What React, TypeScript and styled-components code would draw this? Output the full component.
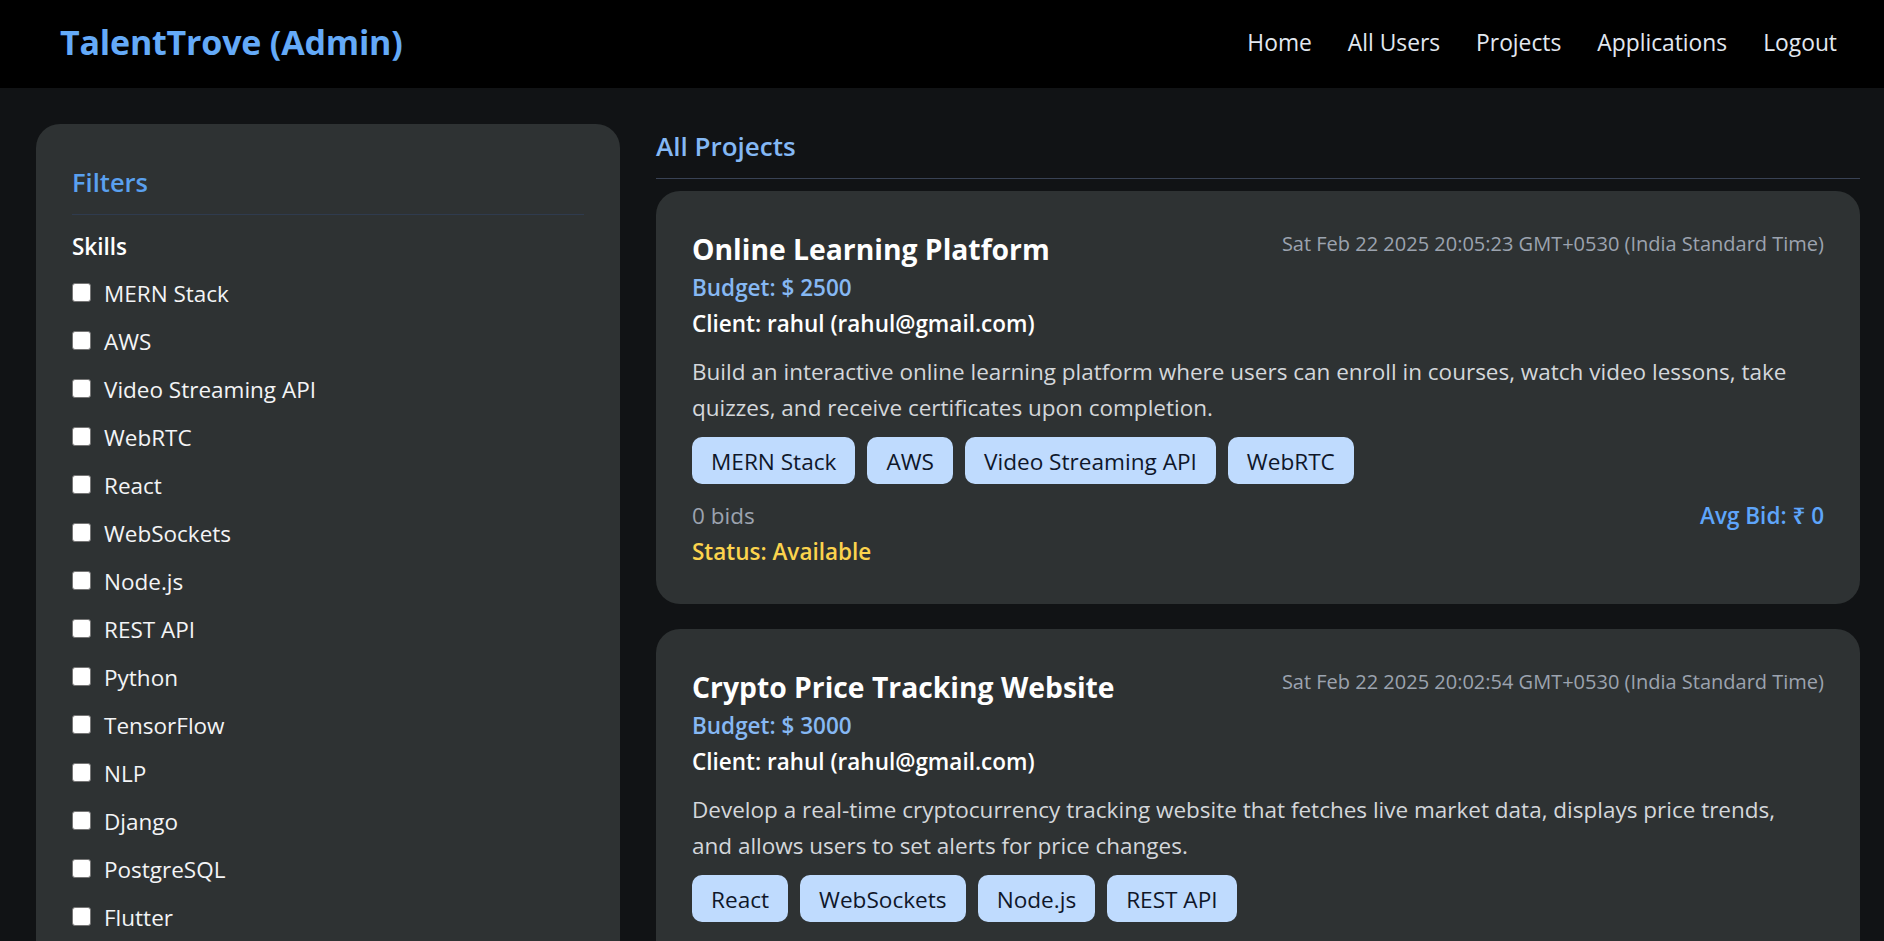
import React from "react";
import styled, { createGlobalStyle } from "styled-components";

const GlobalStyle = createGlobalStyle`
  * { box-sizing: border-box; }
  html, body { margin: 0; padding: 0; background: #111315; }
  body {
    font-family: "Open Sans", "Noto Sans", sans-serif;
    color: #ffffff;
    -webkit-font-smoothing: antialiased;
  }
`;

const Header = styled.header`
  height: 88px;
  background: #000000;
  display: flex;
  align-items: center;
  justify-content: space-between;
  padding: 0 47px 4px 60px;
`;

const Logo = styled.div`
  font-size: 34px;
  font-weight: 700;
  color: #64aaf8;
  letter-spacing: -0.2px;
`;

const Nav = styled.nav`
  display: flex;
  gap: 36px;
`;

const NavLink = styled.a`
  color: #e2e8f0;
  font-size: 22.8px;
  text-decoration: none;
  cursor: pointer;
`;

const Layout = styled.div`
  display: grid;
  grid-template-columns: 584px 1fr;
  gap: 36px;
  padding: 36px 24px 36px 36px;
  align-items: start;
`;

const Sidebar = styled.aside`
  background: #2e3233;
  border-radius: 24px;
  padding: 40px 36px 36px;
`;

const SidebarTitle = styled.h2`
  margin: 0;
  font-size: 25.5px;
  font-weight: 600;
  line-height: 36px;
  color: #5aa0ef;
  padding-bottom: 14px;
  border-bottom: 1px solid #2f3b4e;
`;

const GroupTitle = styled.h3`
  margin: 17px 0 8px;
  font-size: 22.5px;
  font-weight: 600;
  line-height: 30px;
  color: #ffffff;
`;

const SkillList = styled.div`
  display: flex;
  flex-direction: column;
`;

const SkillRow = styled.label`
  display: flex;
  align-items: center;
  gap: 13px;
  height: 48px;
  font-size: 22.5px;
  line-height: 48px;
  color: #f3f4f6;
  cursor: pointer;
`;

const Checkbox = styled.input.attrs({ type: "checkbox" })`
  appearance: none;
  -webkit-appearance: none;
  margin: 0 0 3px 0;
  width: 19px;
  height: 19px;
  flex: none;
  background: #ffffff;
  border: 1px solid #767676;
  border-radius: 3px;
`;

const Main = styled.main`
  display: flex;
  flex-direction: column;
  min-width: 0;
`;

const PageTitle = styled.h2`
  margin: 0;
  font-size: 26px;
  font-weight: 600;
  line-height: 36px;
  color: #84b8f4;
  padding: 4px 0 14px;
  border-bottom: 1px solid #394254;
`;

const CardList = styled.div`
  display: flex;
  flex-direction: column;
  gap: 25px;
  margin-top: 12px;
`;

const Card = styled.article`
  background: #2e3233;
  border-radius: 24px;
  padding: 38px 36px 34px;
`;

const CardHead = styled.div`
  display: flex;
  justify-content: space-between;
  align-items: flex-start;
  gap: 24px;
`;

const Title = styled.h3`
  margin: 0;
  font-size: 28.3px;
  font-weight: 700;
  line-height: 40px;
  color: #ffffff;
`;

const DateText = styled.span`
  font-size: 20px;
  line-height: 30px;
  color: #9ca3af;
  white-space: nowrap;
`;

const Budget = styled.div`
  margin-top: 1px;
  font-size: 22.5px;
  font-weight: 600;
  line-height: 36px;
  color: #86b8f3;
`;

const Client = styled.div`
  font-size: 22.5px;
  font-weight: 600;
  line-height: 36px;
  color: #ffffff;
`;

const Description = styled.p`
  margin: 12px 0 0;
  font-size: 22.5px;
  line-height: 36px;
  color: #d4d7db;
  padding-right: 12px;
`;

const Tags = styled.div`
  display: flex;
  flex-wrap: wrap;
  gap: 12px;
  margin-top: 11px;
`;

const Tag = styled.span`
  background: #bfdbfe;
  color: #0f172a;
  border-radius: 10px;
  padding: 10px 19px 7px;
  font-size: 22.6px;
  line-height: 30px;
`;

const StatsRow = styled.div`
  margin-top: 14px;
  display: flex;
  justify-content: space-between;
  font-size: 22.5px;
  line-height: 36px;
`;

const Bids = styled.span`
  color: #9ca3af;
`;

const AvgBid = styled.span`
  color: #5ea5fa;
  font-weight: 600;
`;

const Status = styled.div`
  font-size: 22.5px;
  font-weight: 600;
  line-height: 36px;
  color: #fcd34d;
`;

const skills = [
  "MERN Stack",
  "AWS",
  "Video Streaming API",
  "WebRTC",
  "React",
  "WebSockets",
  "Node.js",
  "REST API",
  "Python",
  "TensorFlow",
  "NLP",
  "Django",
  "PostgreSQL",
  "Flutter",
  "Firebase",
  "MongoDB",
];

type Project = {
  title: string;
  date: string;
  budget: number;
  client: string;
  email: string;
  description: string;
  skills: string[];
  bids: number;
  avg: number;
  status: string;
};

const projects: Project[] = [
  {
    title: "Online Learning Platform",
    date: "Sat Feb 22 2025 20:05:23 GMT+0530 (India Standard Time)",
    budget: 2500,
    client: "rahul",
    email: "rahul@gmail.com",
    description:
      "Build an interactive online learning platform where users can enroll in courses, watch video lessons, take quizzes, and receive certificates upon completion.",
    skills: ["MERN Stack", "AWS", "Video Streaming API", "WebRTC"],
    bids: 0,
    avg: 0,
    status: "Available",
  },
  {
    title: "Crypto Price Tracking Website",
    date: "Sat Feb 22 2025 20:02:54 GMT+0530 (India Standard Time)",
    budget: 3000,
    client: "rahul",
    email: "rahul@gmail.com",
    description:
      "Develop a real-time cryptocurrency tracking website that fetches live market data, displays price trends, and allows users to set alerts for price changes.",
    skills: ["React", "WebSockets", "Node.js", "REST API"],
    bids: 0,
    avg: 0,
    status: "Available",
  },
];

export default function App() {
  return (
    <>
      <GlobalStyle />
      <Header>
        <Logo>TalentTrove (Admin)</Logo>
        <Nav>
          <NavLink>Home</NavLink>
          <NavLink>All Users</NavLink>
          <NavLink>Projects</NavLink>
          <NavLink>Applications</NavLink>
          <NavLink>Logout</NavLink>
        </Nav>
      </Header>
      <Layout>
        <Sidebar>
          <SidebarTitle>Filters</SidebarTitle>
          <GroupTitle>Skills</GroupTitle>
          <SkillList>
            {skills.map((s) => (
              <SkillRow key={s}>
                <Checkbox />
                {s}
              </SkillRow>
            ))}
          </SkillList>
        </Sidebar>
        <Main>
          <PageTitle>All Projects</PageTitle>
          <CardList>
            {projects.map((p) => (
              <Card key={p.title}>
                <CardHead>
                  <Title>{p.title}</Title>
                  <DateText>{p.date}</DateText>
                </CardHead>
                <Budget>Budget: $ {p.budget}</Budget>
                <Client>
                  Client: {p.client} ({p.email})
                </Client>
                <Description>{p.description}</Description>
                <Tags>
                  {p.skills.map((s) => (
                    <Tag key={s}>{s}</Tag>
                  ))}
                </Tags>
                <StatsRow>
                  <Bids>{p.bids} bids</Bids>
                  <AvgBid>Avg Bid: ₹ {p.avg}</AvgBid>
                </StatsRow>
                <Status>Status: {p.status}</Status>
              </Card>
            ))}
          </CardList>
        </Main>
      </Layout>
    </>
  );
}
